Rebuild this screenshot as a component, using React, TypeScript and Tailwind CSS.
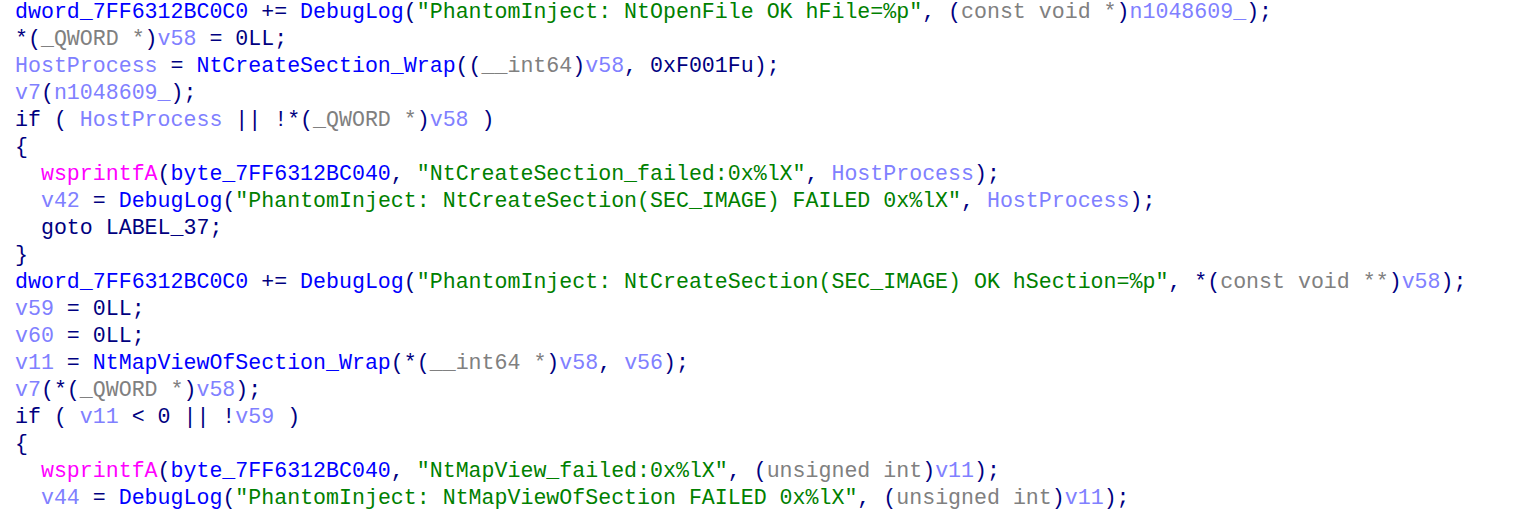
import React from 'react';

type Tok = [string, string];

const C: Record<string, string> = {
    n: 'text-[#000080]',
    b: 'text-[#0000ff]',
    g: 'text-[#008000]',
    t: 'text-[#808080]',
    v: 'text-[#8080ff]',
    m: 'text-[#ff00ff]',
};

const lines: Tok[][] = [
    [['b', 'dword_7FF6312BC0C0'], ['n', ' += '], ['b', 'DebugLog'], ['n', '('], ['g', '"PhantomInject: NtOpenFile OK hFile=%p"'], ['n', ', ('], ['t', 'const void *'], ['n', ')'], ['v', 'n1048609_'], ['n', ');']],
    [['n', '*('], ['t', '_QWORD *'], ['n', ')'], ['v', 'v58'], ['n', ' = 0LL;']],
    [['v', 'HostProcess'], ['n', ' = '], ['b', 'NtCreateSection_Wrap'], ['n', '(('], ['t', '__int64'], ['n', ')'], ['v', 'v58'], ['n', ', 0xF001Fu);']],
    [['v', 'v7'], ['n', '('], ['v', 'n1048609_'], ['n', ');']],
    [['n', 'if ( '], ['v', 'HostProcess'], ['n', ' || !*('], ['t', '_QWORD *'], ['n', ')'], ['v', 'v58'], ['n', ' )']],
    [['n', '{']],
    [['n', '  '], ['m', 'wsprintfA'], ['n', '('], ['b', 'byte_7FF6312BC040'], ['n', ', '], ['g', '"NtCreateSection_failed:0x%lX"'], ['n', ', '], ['v', 'HostProcess'], ['n', ');']],
    [['n', '  '], ['v', 'v42'], ['n', ' = '], ['b', 'DebugLog'], ['n', '('], ['g', '"PhantomInject: NtCreateSection(SEC_IMAGE) FAILED 0x%lX"'], ['n', ', '], ['v', 'HostProcess'], ['n', ');']],
    [['n', '  goto LABEL_37;']],
    [['n', '}']],
    [['b', 'dword_7FF6312BC0C0'], ['n', ' += '], ['b', 'DebugLog'], ['n', '('], ['g', '"PhantomInject: NtCreateSection(SEC_IMAGE) OK hSection=%p"'], ['n', ', *('], ['t', 'const void **'], ['n', ')'], ['v', 'v58'], ['n', ');']],
    [['v', 'v59'], ['n', ' = 0LL;']],
    [['v', 'v60'], ['n', ' = 0LL;']],
    [['v', 'v11'], ['n', ' = '], ['b', 'NtMapViewOfSection_Wrap'], ['n', '(*('], ['t', '__int64 *'], ['n', ')'], ['v', 'v58'], ['n', ', '], ['v', 'v56'], ['n', ');']],
    [['v', 'v7'], ['n', '(*('], ['t', '_QWORD *'], ['n', ')'], ['v', 'v58'], ['n', ');']],
    [['n', 'if ( '], ['v', 'v11'], ['n', ' < 0 || !'], ['v', 'v59'], ['n', ' )']],
    [['n', '{']],
    [['n', '  '], ['m', 'wsprintfA'], ['n', '('], ['b', 'byte_7FF6312BC040'], ['n', ', '], ['g', '"NtMapView_failed:0x%lX"'], ['n', ', ('], ['t', 'unsigned int'], ['n', ')'], ['v', 'v11'], ['n', ');']],
    [['n', '  '], ['v', 'v44'], ['n', ' = '], ['b', 'DebugLog'], ['n', '('], ['g', '"PhantomInject: NtMapViewOfSection FAILED 0x%lX"'], ['n', ', ('], ['t', 'unsigned int'], ['n', ')'], ['v', 'v11'], ['n', ');']],
];

export default function App() {
    return (
        <div className="w-[1529px] h-[514px] overflow-hidden bg-white">
            <pre className="-mt-[1px] pl-[15px] font-['Liberation_Mono',monospace] text-[21.6px] leading-[27px] whitespace-pre">
                {lines.map((line, i) => (
                    <div key={i}>
                        {line.map(([c, s], j) => (
                            <span key={j} className={C[c]}>
                                {s}
                            </span>
                        ))}
                    </div>
                ))}
            </pre>
        </div>
    );
}
